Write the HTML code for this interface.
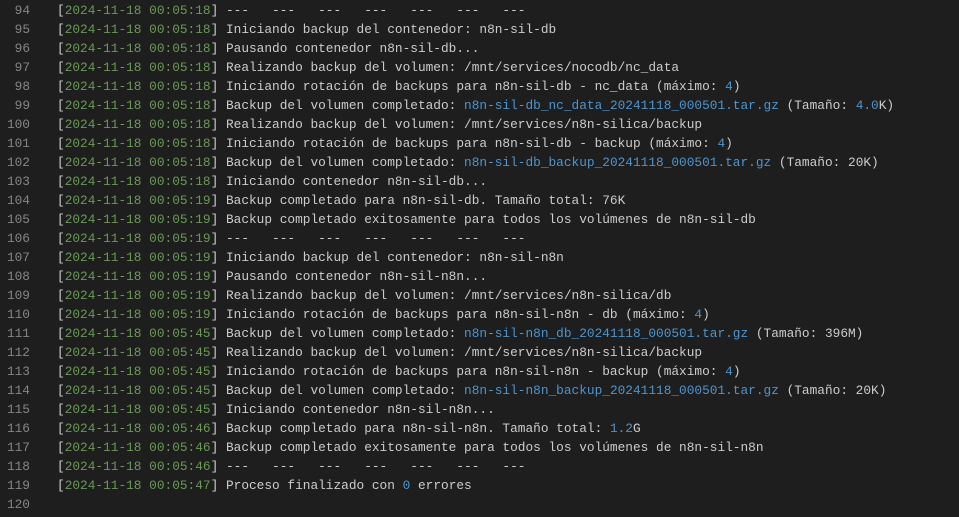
<!DOCTYPE html>
<html><head><meta charset="utf-8"><style>
html,body{margin:0;padding:0;background:#1e1e1e;width:959px;height:517px;overflow:hidden}
.w{position:absolute;top:1px;left:0;font-family:"Liberation Mono",monospace;font-size:12.8px;line-height:19px;color:#cccccc}
.l{height:19px;position:relative}
.n{position:absolute;left:0;width:30px;text-align:right;color:#858585}
.t{position:absolute;left:57px;white-space:pre}
.g{color:#6a9955}
.b{color:#4e94ce}
</style></head><body><div class="w">
<div class="l"><span class="n">94</span><span class="t">[<span class="g">2024-11-18 00:05:18</span>] ---   ---   ---   ---   ---   ---   ---</span></div>
<div class="l"><span class="n">95</span><span class="t">[<span class="g">2024-11-18 00:05:18</span>] Iniciando backup del contenedor: n8n-sil-db</span></div>
<div class="l"><span class="n">96</span><span class="t">[<span class="g">2024-11-18 00:05:18</span>] Pausando contenedor n8n-sil-db...</span></div>
<div class="l"><span class="n">97</span><span class="t">[<span class="g">2024-11-18 00:05:18</span>] Realizando backup del volumen: /mnt/services/nocodb/nc_data</span></div>
<div class="l"><span class="n">98</span><span class="t">[<span class="g">2024-11-18 00:05:18</span>] Iniciando rotación de backups para n8n-sil-db - nc_data (máximo: <span class="b">4</span>)</span></div>
<div class="l"><span class="n">99</span><span class="t">[<span class="g">2024-11-18 00:05:18</span>] Backup del volumen completado: <span class="b">n8n-sil-db_nc_data_20241118_000501.tar.gz</span> (Tamaño: <span class="b">4.0</span>K)</span></div>
<div class="l"><span class="n">100</span><span class="t">[<span class="g">2024-11-18 00:05:18</span>] Realizando backup del volumen: /mnt/services/n8n-silica/backup</span></div>
<div class="l"><span class="n">101</span><span class="t">[<span class="g">2024-11-18 00:05:18</span>] Iniciando rotación de backups para n8n-sil-db - backup (máximo: <span class="b">4</span>)</span></div>
<div class="l"><span class="n">102</span><span class="t">[<span class="g">2024-11-18 00:05:18</span>] Backup del volumen completado: <span class="b">n8n-sil-db_backup_20241118_000501.tar.gz</span> (Tamaño: 20K)</span></div>
<div class="l"><span class="n">103</span><span class="t">[<span class="g">2024-11-18 00:05:18</span>] Iniciando contenedor n8n-sil-db...</span></div>
<div class="l"><span class="n">104</span><span class="t">[<span class="g">2024-11-18 00:05:19</span>] Backup completado para n8n-sil-db. Tamaño total: 76K</span></div>
<div class="l"><span class="n">105</span><span class="t">[<span class="g">2024-11-18 00:05:19</span>] Backup completado exitosamente para todos los volúmenes de n8n-sil-db</span></div>
<div class="l"><span class="n">106</span><span class="t">[<span class="g">2024-11-18 00:05:19</span>] ---   ---   ---   ---   ---   ---   ---</span></div>
<div class="l"><span class="n">107</span><span class="t">[<span class="g">2024-11-18 00:05:19</span>] Iniciando backup del contenedor: n8n-sil-n8n</span></div>
<div class="l"><span class="n">108</span><span class="t">[<span class="g">2024-11-18 00:05:19</span>] Pausando contenedor n8n-sil-n8n...</span></div>
<div class="l"><span class="n">109</span><span class="t">[<span class="g">2024-11-18 00:05:19</span>] Realizando backup del volumen: /mnt/services/n8n-silica/db</span></div>
<div class="l"><span class="n">110</span><span class="t">[<span class="g">2024-11-18 00:05:19</span>] Iniciando rotación de backups para n8n-sil-n8n - db (máximo: <span class="b">4</span>)</span></div>
<div class="l"><span class="n">111</span><span class="t">[<span class="g">2024-11-18 00:05:45</span>] Backup del volumen completado: <span class="b">n8n-sil-n8n_db_20241118_000501.tar.gz</span> (Tamaño: 396M)</span></div>
<div class="l"><span class="n">112</span><span class="t">[<span class="g">2024-11-18 00:05:45</span>] Realizando backup del volumen: /mnt/services/n8n-silica/backup</span></div>
<div class="l"><span class="n">113</span><span class="t">[<span class="g">2024-11-18 00:05:45</span>] Iniciando rotación de backups para n8n-sil-n8n - backup (máximo: <span class="b">4</span>)</span></div>
<div class="l"><span class="n">114</span><span class="t">[<span class="g">2024-11-18 00:05:45</span>] Backup del volumen completado: <span class="b">n8n-sil-n8n_backup_20241118_000501.tar.gz</span> (Tamaño: 20K)</span></div>
<div class="l"><span class="n">115</span><span class="t">[<span class="g">2024-11-18 00:05:45</span>] Iniciando contenedor n8n-sil-n8n...</span></div>
<div class="l"><span class="n">116</span><span class="t">[<span class="g">2024-11-18 00:05:46</span>] Backup completado para n8n-sil-n8n. Tamaño total: <span class="b">1.2</span>G</span></div>
<div class="l"><span class="n">117</span><span class="t">[<span class="g">2024-11-18 00:05:46</span>] Backup completado exitosamente para todos los volúmenes de n8n-sil-n8n</span></div>
<div class="l"><span class="n">118</span><span class="t">[<span class="g">2024-11-18 00:05:46</span>] ---   ---   ---   ---   ---   ---   ---</span></div>
<div class="l"><span class="n">119</span><span class="t">[<span class="g">2024-11-18 00:05:47</span>] Proceso finalizado con <span class="b">0</span> errores</span></div>
<div class="l"><span class="n">120</span><span class="t"></span></div>
</div></body></html>
